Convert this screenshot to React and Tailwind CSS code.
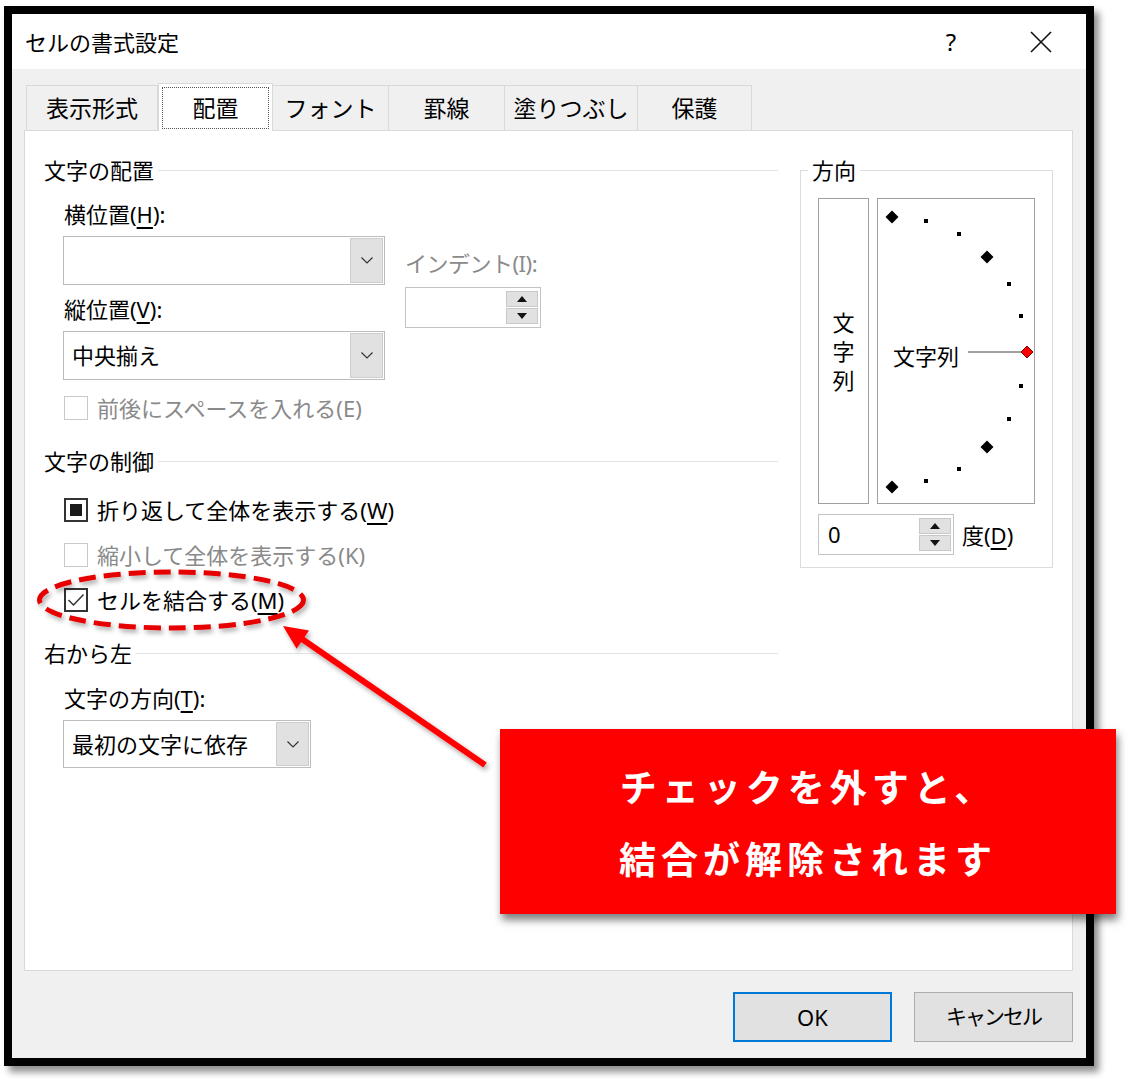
import React from 'react'

function Chevron() {
  return (
    <svg width="12" height="7" viewBox="0 0 12 7">
      <polyline points="0.5,0.5 6,6 11.5,0.5" fill="none" stroke="#333" strokeWidth="1.2" />
    </svg>
  )
}

function Combo({ className, text }) {
  return (
    <div className={`flex bg-white border border-[#bcbcbc] ${className}`}>
      <div className="flex-1 flex items-center pl-[8px] text-[22px] text-black">{text}</div>
      <div className="w-[33px] m-px bg-[#e1e1e1] border border-[#cdcdcd] flex items-center justify-center">
        <Chevron />
      </div>
    </div>
  )
}

function Spinner({ className, value }) {
  return (
    <div className={`flex bg-white border border-[#c3c3c3] ${className}`}>
      <div className="flex-1 flex items-center pl-[9px] text-[22px] text-black">{value}</div>
      <div className="w-[32px] my-[3px] mr-[2px] flex flex-col gap-px">
        <div className="flex-1 bg-[#e1e1e1] border border-[#c8c8c8] flex items-center justify-center">
          <svg width="10" height="6" viewBox="0 0 10 6"><polygon points="5,0 10,6 0,6" fill="#111" /></svg>
        </div>
        <div className="flex-1 bg-[#e1e1e1] border border-[#c8c8c8] flex items-center justify-center">
          <svg width="10" height="6" viewBox="0 0 10 6"><polygon points="0,0 10,0 5,6" fill="#111" /></svg>
        </div>
      </div>
    </div>
  )
}

function Check({ state, disabled, className = '', children }) {
  return (
    <div className={`flex items-center h-[30px] ml-[20px] ${className}`}>
      <div
        className={`w-[24px] h-[24px] flex items-center justify-center bg-white ${
          disabled ? 'border border-[#c9c9c9]' : 'border-2 border-[#333]'
        }`}
      >
        {state === 'square' && <div className="w-[12px] h-[12px] bg-[#1a1a1a]" />}
        {state === 'check' && (
          <svg width="18" height="14" viewBox="0 0 18 14">
            <polyline points="1.5,7 6.5,12 16.5,1.5" fill="none" stroke="#333" strokeWidth="1.5" />
          </svg>
        )}
      </div>
      <span className={`ml-[9px] text-[22px] leading-[30px] ${disabled ? 'text-[#8a8a8a]' : 'text-black'}`}>
        {children}
      </span>
    </div>
  )
}

function Heading({ className = '', children }) {
  return (
    <div className={`flex items-center h-[30px] ${className}`}>
      <span className="text-[22px] leading-[30px] text-black">{children}</span>
      <div className="flex-1 h-px bg-[#e3e3e3] ml-[4px]" />
    </div>
  )
}

const tabs = [
  { label: '表示形式', w: 'w-[132px]' },
  { label: '配置', w: 'w-[115px]', active: true },
  { label: 'フォント', w: 'w-[116px]' },
  { label: '罫線', w: 'w-[116px]' },
  { label: '塗りつぶし', w: 'w-[133px]' },
  { label: '保護', w: 'w-[114px]' },
]

const bigDots = [
  [15, 19],
  [110, 59],
  [110, 249],
  [15, 289],
]
const smallDots = [
  [49, 23],
  [82, 36],
  [132, 86],
  [144, 118],
  [144, 188],
  [132, 221],
  [82, 271],
  [49, 283],
]

function Dial() {
  return (
    <div className="relative w-[158px] h-[306px] border border-[#a0a0a0] bg-white">
      <svg width="156" height="304" viewBox="1 1 156 304" className="block">
        {bigDots.map(([x, y], i) => (
          <polygon key={i} points={`${x},${y - 6.5} ${x + 6.5},${y} ${x},${y + 6.5} ${x - 6.5},${y}`} fill="#000" />
        ))}
        {smallDots.map(([x, y], i) => (
          <rect key={i} x={x - 2} y={y - 2} width="4" height="4" fill="#000" />
        ))}
        <line x1="91" y1="154" x2="144" y2="154" stroke="#444" strokeWidth="1" />
        <polygon points="150,148 156,154 150,160 144,154" fill="#ff0000" stroke="#7a0000" strokeWidth="1" />
      </svg>
      <span className="absolute left-[15px] top-[142px] text-[22px] leading-[30px] text-black">文字列</span>
    </div>
  )
}

export default function App() {
  return (
    <div className="relative w-[1128px] h-[1079px] bg-white overflow-hidden pt-[6px] pl-[4px] font-['Noto_Sans','Noto_Sans_CJK_JP',sans-serif]">
      {/* ダイアログ本体 */}
      <div className="w-[1090px] h-[1060px] border-[8px] border-black shadow-[5px_6px_7px_rgba(0,0,0,0.45)] flex flex-col">
        {/* タイトルバー */}
        <div className="h-[55px] bg-white flex items-center pl-[13px]">
          <span className="text-[22px] leading-none text-black">セルの書式設定</span>
          <div className="ml-auto flex">
            <div className="w-[90px] flex items-center justify-center text-[24px] leading-none text-black">?</div>
            <div className="w-[90px] flex items-center justify-center">
              <svg width="22" height="22" viewBox="0 0 22 22">
                <path d="M1 1 L21 21 M21 1 L1 21" stroke="#111" strokeWidth="1.6" />
              </svg>
            </div>
          </div>
        </div>

        <div className="flex-1 bg-[#f0f0f0] pl-[12px] pr-[13px] pt-[14px] flex flex-col">
          {/* タブ */}
          <div className="relative z-10 flex items-end pl-[2px] -mb-px h-[48px]">
            {tabs.map((t) =>
              t.active ? (
                <div
                  key={t.label}
                  className={`${t.w} h-[48px] bg-white border border-b-0 border-[#d9d9d9] p-[3px] pb-[2px]`}
                >
                  <div className="w-full h-full border border-dotted border-[#555] flex items-center justify-center text-[23px] text-black">
                    {t.label}
                  </div>
                </div>
              ) : (
                <div
                  key={t.label}
                  className={`${t.w} h-[46px] bg-[#f0f0f0] border-t border-r border-b border-[#d9d9d9] first:border-l flex items-center justify-center text-[23px] text-black`}
                >
                  {t.label}
                </div>
              )
            )}
          </div>

          {/* パネル */}
          <div className="h-[841px] bg-white border border-[#d9d9d9] flex pt-[24px] pl-[19px]">
            {/* 左列 */}
            <div className="w-[734px] flex flex-col">
              <Heading>文字の配置</Heading>

              <div className="flex mt-[14px] ml-[20px]">
                <div className="w-[321px] flex flex-col">
                  <div className="text-[22px] leading-[30px] text-black">
                    横位置(<span className="underline underline-offset-4">H</span>):
                  </div>
                  <Combo className="mt-[7px] h-[49px] -ml-px" text="" />
                  <div className="mt-[9px] text-[22px] leading-[30px] text-black">
                    縦位置(<span className="underline underline-offset-4">V</span>):
                  </div>
                  <Combo className="mt-[7px] h-[49px] -ml-px" text="中央揃え" />
                </div>
                <div className="ml-[20px] mt-[49px] flex flex-col">
                  <div className="text-[22px] leading-[30px] text-[#8a8a8a] tracking-[-0.5px]">インデント(I):</div>
                  <Spinner className="mt-[9px] w-[136px] h-[41px]" value="" />
                </div>
              </div>

              <Check disabled className="mt-[13px]">前後にスペースを入れる(E)</Check>

              <Heading className="mt-[23px]">文字の制御</Heading>
              <Check state="square" className="mt-[19px]">
                折り返して全体を表示する(<span className="underline underline-offset-4">W</span>)
              </Check>
              <Check disabled className="mt-[15px]">縮小して全体を表示する(K)</Check>
              <Check state="check" className="mt-[15px]">
                セルを結合する(<span className="underline underline-offset-4">M</span>)
              </Check>

              <Heading className="mt-[23px]">右から左</Heading>
              <div className="mt-[15px] ml-[20px] text-[22px] leading-[30px] text-black">
                文字の方向(<span className="underline underline-offset-4">T</span>):
              </div>
              <Combo className="mt-[7px] ml-[19px] w-[248px] h-[48px]" text="最初の文字に依存" />
            </div>

            {/* 方向 */}
            <div className="ml-[22px]">
              <fieldset className="w-[253px] border border-[#dcdcdc] px-[17px] pt-[13px] pb-[12px]">
                <legend className="-ml-[10px] px-[4px] text-[22px] leading-[30px] text-black">方向</legend>
                <div className="flex gap-[8px]">
                  <div className="w-[51px] h-[306px] border border-[#a0a0a0] flex flex-col items-center justify-center text-[22px] leading-[29px] text-black">
                    <span>文</span>
                    <span>字</span>
                    <span>列</span>
                  </div>
                  <Dial />
                </div>
                <div className="mt-[10px] flex items-center">
                  <Spinner className="w-[136px] h-[41px]" value="0" />
                  <span className="ml-[8px] text-[22px] leading-[30px] text-black">
                    度(<span className="underline underline-offset-4">D</span>)
                  </span>
                </div>
              </fieldset>
            </div>
          </div>

          {/* ボタン */}
          <div className="mt-[21px] flex justify-end gap-[22px]">
            <div className="w-[159px] h-[50px] bg-[#e1e1e1] border-2 border-[#0078d7] flex items-center justify-center text-[22px] text-black">
              OK
            </div>
            <div className="w-[159px] h-[50px] bg-[#e1e1e1] border border-[#adadad] flex items-center justify-center text-[21px] tracking-[-2px] text-black">
              キャンセル
            </div>
          </div>
        </div>
      </div>

      {/* 注釈: 点線の楕円と矢印 */}
      <svg className="absolute left-0 top-0 pointer-events-none" width="1128" height="1079" viewBox="0 0 1128 1079">
        <defs>
          <filter id="sh" x="-20%" y="-20%" width="140%" height="140%">
            <feDropShadow dx="2" dy="3" stdDeviation="2.5" floodColor="#000" floodOpacity="0.35" />
          </filter>
        </defs>
        <ellipse
          cx="171.5"
          cy="600"
          rx="132"
          ry="28"
          fill="none"
          stroke="#e60000"
          strokeWidth="5"
          strokeDasharray="17 8"
          filter="url(#sh)"
        />
        <g filter="url(#sh)">
          <line x1="485" y1="765" x2="302" y2="639" stroke="#ff0000" strokeWidth="6" />
          <polygon points="283,626 309,630.5 296.6,648.7" fill="#ff0000" />
        </g>
      </svg>

      {/* 注釈ボックス */}
      <div className="absolute left-[500px] top-[729px] w-[616px] h-[185px] bg-[#ff0000] shadow-[2px_6px_8px_rgba(0,0,0,0.5)] flex flex-col items-center justify-center text-white font-bold text-[37px] leading-[72px] tracking-[5px] font-['Noto_Sans_CJK_JP',sans-serif]">
        <span>チェックを外すと、</span>
        <span>結合が解除されます</span>
      </div>
    </div>
  )
}
